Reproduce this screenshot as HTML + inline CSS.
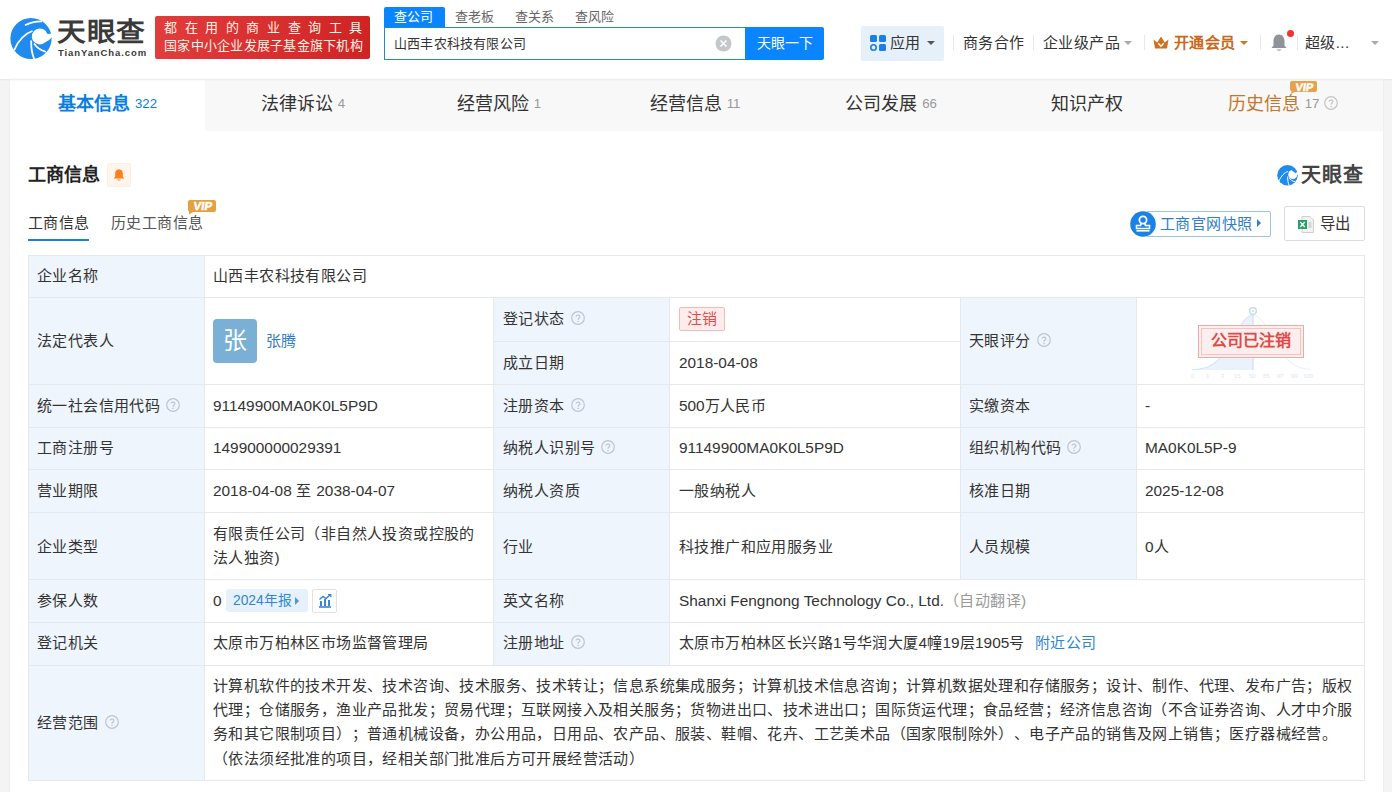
<!DOCTYPE html>
<html lang="zh-CN"><head><meta charset="utf-8">
<style>
*{margin:0;padding:0;box-sizing:border-box}
html,body{text-spacing-trim:space-all;width:1392px;height:792px;overflow:hidden;background:#f4f4f4;font-family:"Liberation Sans",sans-serif;color:#333}
.a{position:absolute;white-space:nowrap}
#hdr{position:absolute;left:0;top:0;width:1392px;height:79px;background:#fff;box-shadow:0 1px 1px rgba(0,0,0,.05)}
#card{position:absolute;left:10px;top:79px;width:1373px;height:713px;background:#fff;box-shadow:0 0 1px rgba(0,0,0,.12)}
#tabbar{position:absolute;left:10px;top:79px;width:1373px;height:52px;background:#f8f8f8}
.tab{position:absolute;top:78px;height:52px;line-height:52px;font-size:18px;color:#333;text-align:center;white-space:nowrap}
.tab .n{font-size:13.2px;color:#999;margin-left:5px;position:relative;top:-2px}
.hl{position:absolute;height:1px;background:#e5e8ec}
.vl{position:absolute;width:1px;background:#e5e8ec}
.lb{position:absolute;background:#eff5fc}
.t{position:absolute;white-space:nowrap;font-size:15px;letter-spacing:0.4px;color:#333;line-height:20px}
.l{font-size:15.4px;letter-spacing:0}
.q{display:inline-block;width:14px;height:14px;vertical-align:middle;margin-left:6px;position:relative;top:-2px;letter-spacing:0}
.q svg{display:block}
</style></head><body>
<div id="hdr"></div>
<svg class="a" style="left:8px;top:14px" width="48" height="48" viewBox="0 0 48 48">
 <circle cx="23" cy="24.5" r="20.6" fill="#1f8bee"/>
 <path d="M39.4 20 A8 8 0 1 0 37 28.5 Q41 27 43.8 23.2 L46 19.5 Z" fill="#fff"/>
 <path d="M6 36.5 C10 27 17 19.5 24.5 17" stroke="#fff" stroke-width="1.8" fill="none"/>
 <path d="M17 11.3 C22 8.5 28 7.2 34 7.3" stroke="#fff" stroke-width="1.8" fill="none"/>
 <path d="M23.2 26.5 C23 34 24 40 26.2 45" stroke="#fff" stroke-width="1.8" fill="none"/>
 <path d="M26 29.5 C29 34 33 36.5 38 37.8" stroke="#fff" stroke-width="1.8" fill="none"/>
</svg>
<div class="a" style="left:57px;top:15px;font-size:26px;font-weight:bold;color:#3a3a3a;line-height:34px;letter-spacing:1px;transform:scaleX(1.1);transform-origin:0 0">天眼查</div>
<div class="a" style="left:58px;top:47px;font-size:9.5px;font-weight:bold;color:#3a3a3a;line-height:12px;letter-spacing:0.9px">TianYanCha.com</div>
<div class="a" style="left:155px;top:16px;width:215px;height:43px;border-radius:2px;background:linear-gradient(90deg,#e23c3c,#cf2424)"></div>
<div class="a" style="left:164px;top:19px;font-size:13px;line-height:18px;color:#fff2e6;letter-spacing:7.6px">都在用的商业查询工具</div>
<div class="a" style="left:164px;top:37px;font-size:13px;line-height:18px;color:#fff2e6;letter-spacing:0.25px">国家中小企业发展子基金旗下机构</div>
<!-- search -->
<div class="a" style="left:384px;top:7px;width:61px;height:21px;background:#0a84ff;border-radius:2px 2px 0 0"></div>
<div class="a" style="left:394px;top:8px;font-size:13px;line-height:18px;letter-spacing:0.2px;color:#fff">查公司</div>
<div class="a" style="left:455px;top:8px;font-size:13px;line-height:18px;letter-spacing:0.2px;color:#666">查老板</div>
<div class="a" style="left:515px;top:8px;font-size:13px;line-height:18px;letter-spacing:0.2px;color:#666">查关系</div>
<div class="a" style="left:575px;top:8px;font-size:13px;line-height:18px;letter-spacing:0.2px;color:#666">查风险</div>
<div class="a" style="left:384px;top:27px;width:362px;height:33px;border:1px solid #2b88c8;border-right:none;background:#fff"></div>
<div class="a" style="left:394px;top:34px;font-size:13px;letter-spacing:0.2px;line-height:20px;color:#333">山西丰农科技有限公司</div>
<svg class="a" style="left:715px;top:35px" width="17" height="17" viewBox="0 0 17 17"><circle cx="8.5" cy="8.5" r="8" fill="#c4c7cc"/><path d="M5.5 5.5L11.5 11.5M11.5 5.5L5.5 11.5" stroke="#fff" stroke-width="1.6"/></svg>
<div class="a" style="left:745px;top:27px;width:79px;height:33px;background:#0a84ff;border-radius:0 2px 2px 0;color:#fff;font-size:14px;line-height:33px;text-align:center">天眼一下</div>
<!-- right nav -->
<div class="a" style="left:861px;top:26px;width:83px;height:35px;background:#e6f0fb;border-radius:2px"></div>
<svg class="a" style="left:870px;top:35px" width="16" height="16" viewBox="0 0 16 16"><rect x="0" y="0" width="7" height="7" rx="1.5" fill="#1a7fe8"/><rect x="9" y="0" width="7" height="7" rx="1.5" fill="#1a7fe8"/><rect x="9" y="9" width="7" height="7" rx="1.5" fill="#1a7fe8"/><circle cx="3.5" cy="12.5" r="2.7" fill="none" stroke="#1a7fe8" stroke-width="1.6"/></svg>
<div class="a" style="left:890px;top:33px;font-size:15px;letter-spacing:0.4px;line-height:20px;color:#333">应用</div>
<div class="a" style="left:927px;top:41px;width:0;height:0;border-left:4px solid transparent;border-right:4px solid transparent;border-top:4px solid #555"></div>
<div class="a" style="left:953px;top:35px;width:1px;height:15px;background:#e8e8e8"></div>
<div class="a" style="left:963px;top:33px;font-size:15px;letter-spacing:0.4px;line-height:20px;color:#333">商务合作</div>
<div class="a" style="left:1033px;top:35px;width:1px;height:15px;background:#e8e8e8"></div>
<div class="a" style="left:1043px;top:33px;font-size:15px;letter-spacing:0.4px;line-height:20px;color:#333">企业级产品</div>
<div class="a" style="left:1124px;top:41px;width:0;height:0;border-left:4px solid transparent;border-right:4px solid transparent;border-top:4px solid #aaa"></div>
<div class="a" style="left:1144px;top:35px;width:1px;height:15px;background:#e8e8e8"></div>
<svg class="a" style="left:1153px;top:36px" width="16" height="13" viewBox="0 0 16 13"><path d="M0.5 3.5 L4.2 6.5 L8 0.5 L11.8 6.5 L15.5 3.5 L14 12.5 L2 12.5 Z" fill="#d0701e"/><path d="M5.3 7.3 L8 10.2 L10.7 7.3" fill="none" stroke="#fff" stroke-width="1.5"/></svg>
<div class="a" style="left:1174px;top:33px;font-size:15px;letter-spacing:0.4px;line-height:20px;color:#c8691c;font-weight:bold">开通会员</div>
<div class="a" style="left:1240px;top:41px;width:0;height:0;border-left:4px solid transparent;border-right:4px solid transparent;border-top:4px solid #d5731d"></div>
<div class="a" style="left:1260px;top:35px;width:1px;height:15px;background:#e8e8e8"></div>
<svg class="a" style="left:1270px;top:33px" width="18" height="19" viewBox="0 0 18 19"><path d="M9 1.5 C5 1.5 3.5 5 3.5 8 L3.5 12.5 L1.5 15 L16.5 15 L14.5 12.5 L14.5 8 C14.5 5 13 1.5 9 1.5Z" fill="#8f949b"/><path d="M6.5 16.5 C7 18 11 18 11.5 16.5Z" fill="#8f949b"/></svg>
<div class="a" style="left:1287px;top:30px;width:7px;height:7px;border-radius:50%;background:#f0332f"></div>
<div class="a" style="left:1297px;top:35px;width:1px;height:15px;background:#e8e8e8"></div>
<div class="a" style="left:1305px;top:33px;font-size:15px;letter-spacing:0.4px;line-height:20px;color:#333">超级...</div>
<div class="a" style="left:1371px;top:41px;width:0;height:0;border-left:4px solid transparent;border-right:4px solid transparent;border-top:4px solid #aaa"></div>

<div id="card"></div>
<div id="tabbar"></div>
<div class="a" style="left:10px;top:79px;width:195px;height:52px;background:#fff"></div>
<div class="tab" style="left:10px;width:195px;color:#0a7ee0;font-weight:bold">基本信息<span class="n" style="color:#0a7ee0;font-weight:normal">322</span></div>
<div class="tab" style="left:205px;width:196px">法律诉讼<span class="n">4</span></div>
<div class="tab" style="left:401px;width:196px">经营风险<span class="n">1</span></div>
<div class="tab" style="left:597px;width:196px">经营信息<span class="n">11</span></div>
<div class="tab" style="left:793px;width:196px">公司发展<span class="n">66</span></div>
<div class="tab" style="left:989px;width:196px">知识产权</div>
<div class="tab" style="left:1185px;width:196px;color:#c5762a">历史信息<span class="n">17</span><span style="display:inline-block;vertical-align:middle;margin-left:5px;position:relative;top:-2px;line-height:0"><svg width="14" height="14" viewBox="0 0 14 14"><circle cx="7" cy="7" r="6.3" fill="none" stroke="#c4c4c4" stroke-width="1.2"/><path d="M5.1 5.4 C5.1 3.6 8.9 3.6 8.9 5.5 C8.9 6.9 7 7 7 8.7" fill="none" stroke="#c4c4c4" stroke-width="1.2"/><circle cx="7" cy="10.5" r="0.8" fill="#c4c4c4"/></svg></span></div>
<svg class="a" style="left:1290px;top:81px" width="27" height="13" viewBox="0 0 27 13"><path d="M2 0 H25 Q27 0 27 2 V9 Q27 11 25 11 H5 L1 13 L1.5 10 Q0 9.5 0 8 V2 Q0 0 2 0Z" fill="#e9a24c"/><text x="14" y="9.8" font-family="Liberation Sans" font-weight="bold" font-size="11" fill="#fff" text-anchor="middle" stroke="#fff" stroke-width="0.5" transform="skewX(-8) translate(1.3 0)">VIP</text></svg>


<div class="a" style="left:0;top:79px;width:1392px;height:2px;background:linear-gradient(#ebebeb,rgba(245,245,245,0))"></div><div class="a" style="left:28px;top:163px;font-size:18px;line-height:24px;font-weight:bold;color:#222">工商信息</div>
<div class="a" style="left:107px;top:163px;width:24px;height:24px;background:#fff5ec;border:1px solid #fcefe4;border-radius:2px"></div>
<svg class="a" style="left:112px;top:168px" width="14" height="14" viewBox="0 0 14 14"><path d="M7 1.2 C4.3 1.2 3.2 3.4 3.2 5.6 L3.2 8.6 L1.8 10.4 L12.2 10.4 L10.8 8.6 L10.8 5.6 C10.8 3.4 9.7 1.2 7 1.2Z" fill="#ff7f1a"/><path d="M5.3 11.4 C5.6 12.9 8.4 12.9 8.7 11.4Z" fill="#ff7f1a"/></svg>
<div class="a" style="left:28px;top:213px;font-size:15px;letter-spacing:0.3px;line-height:20px;color:#333">工商信息</div>
<div class="a" style="left:28px;top:239px;width:61px;height:2px;background:#1a82d6"></div>
<div class="a" style="left:111px;top:213px;font-size:15px;letter-spacing:0.4px;line-height:20px;color:#555">历史工商信息</div>
<svg class="a" style="left:188px;top:200px" width="28" height="15" viewBox="0 0 28 15"><path d="M2 0 H26 Q28 0 28 2 V10 Q28 12 26 12 H5 L1 14.5 L1 11.5 Q0 11 0 9 V2 Q0 0 2 0Z" fill="#e5a040"/><text x="14.5" y="10.3" font-family="Liberation Sans" font-weight="bold" font-size="11.5" fill="#fff" text-anchor="middle" stroke="#fff" stroke-width="0.5" transform="skewX(-8) translate(1.3 0)">VIP</text></svg>
<!-- right logo -->
<svg class="a" style="left:1276px;top:163px" width="24" height="24" viewBox="0 0 48 48">
 <circle cx="23" cy="24.5" r="20.5" fill="#1f8bee"/>
 <circle cx="33.5" cy="23" r="9" fill="#fff"/>
 <path d="M39.5 20.5 L46 14 L46 24 L43.6 23.6 Z" fill="#fff"/>
 <path d="M31 14.5 C34 13.5 39 13.6 42 16.5 C43.5 18 40 19.5 39.5 20.5 Z" fill="#1f8bee"/>
 <path d="M6 36 C10 26 17 19 24 17" stroke="#fff" stroke-width="2" fill="none"/>
 <path d="M23.5 27 C23 34 24 40 26.5 45" stroke="#fff" stroke-width="2" fill="none"/>
 <path d="M26.5 30 C29 34 33 36.5 38 37.5" stroke="#fff" stroke-width="2" fill="none"/>
</svg>
<div class="a" style="left:1301px;top:162px;font-size:20px;line-height:26px;font-weight:bold;color:#444;letter-spacing:1px">天眼查</div>
<!-- buttons -->
<div class="a" style="left:1146px;top:211px;width:125px;height:26px;border:1px solid #9cc3e6;border-radius:2px;background:#fff"></div>
<svg class="a" style="left:1130px;top:211px" width="26" height="26" viewBox="0 0 26 26"><circle cx="13" cy="13" r="12.8" fill="#1a82e6"/><circle cx="13" cy="9" r="3.6" fill="none" stroke="#fff" stroke-width="1.8"/><path d="M11.3 12.2 L10.5 14.5 H6.5 V17.5 H19.5 V14.5 H15.5 L14.7 12.2" fill="none" stroke="#fff" stroke-width="1.6"/><rect x="6.5" y="19" width="13" height="1.6" fill="#fff"/></svg>
<div class="a" style="left:1160px;top:214px;font-size:15px;letter-spacing:0.4px;line-height:20px;color:#2f7ec8">工商官网快照</div>
<div class="a" style="left:1257px;top:219px;width:0;height:0;border-top:4px solid transparent;border-bottom:4px solid transparent;border-left:4px solid #2f7ec8"></div>
<div class="a" style="left:1284px;top:206px;width:81px;height:35px;border:1px solid #dcdcdc;border-radius:2px;background:#fff"></div>
<svg class="a" style="left:1298px;top:216px" width="16" height="17" viewBox="0 0 16 17"><path d="M4 0.5 H12 L15.5 4 V16.5 H4Z" fill="#f2f2f2" stroke="#cfcfcf"/><rect x="0" y="4" width="9" height="9" fill="#21a366"/><path d="M2.2 6 L6.8 11 M6.8 6 L2.2 11" stroke="#fff" stroke-width="1.4"/><path d="M10.5 7 H13.5 M10.5 9 H13.5 M10.5 11 H13.5" stroke="#bbb" stroke-width="1"/></svg>
<div class="a" style="left:1320px;top:214px;font-size:15.4px;line-height:20px;color:#333">导出</div>
<div class="lb" style="left:28px;top:255px;width:176px;height:525px"></div>
<div class="lb" style="left:493px;top:297px;width:176px;height:368px"></div>
<div class="lb" style="left:960px;top:297px;width:176px;height:282px"></div>
<div class="hl" style="left:28px;top:255px;width:1337px"></div>
<div class="hl" style="left:28px;top:297px;width:1337px"></div>
<div class="hl" style="left:28px;top:384px;width:1337px"></div>
<div class="hl" style="left:28px;top:427px;width:1337px"></div>
<div class="hl" style="left:28px;top:469px;width:1337px"></div>
<div class="hl" style="left:28px;top:512px;width:1337px"></div>
<div class="hl" style="left:28px;top:579px;width:1337px"></div>
<div class="hl" style="left:28px;top:622px;width:1337px"></div>
<div class="hl" style="left:28px;top:665px;width:1337px"></div>
<div class="hl" style="left:28px;top:780px;width:1337px"></div>
<div class="hl" style="left:493px;top:341px;width:467px"></div>
<div class="vl" style="left:28px;top:255px;height:526px"></div>
<div class="vl" style="left:1364px;top:255px;height:526px"></div>
<div class="vl" style="left:204px;top:255px;height:525px"></div>
<div class="vl" style="left:493px;top:297px;height:368px"></div>
<div class="vl" style="left:669px;top:297px;height:368px"></div>
<div class="vl" style="left:960px;top:297px;height:282px"></div>
<div class="vl" style="left:1136px;top:297px;height:282px"></div>
<div class="t" style="left:37px;top:266px;">企业名称</div>
<div class="t" style="left:213px;top:266px;">山西丰农科技有限公司</div>
<div class="t" style="left:37px;top:331px;">法定代表人</div>
<div class="a" style="left:213px;top:319px;width:44px;height:44px;border-radius:4px;background:#7aafd6;color:#fff;font-size:24px;line-height:44px;text-align:center">张</div>
<div class="t" style="left:266px;top:331px;color:#2f7ec8">张腾</div>
<div class="t" style="left:503px;top:309px;">登记状态<span class="l"><span class="q"><svg width="14" height="14" viewBox="0 0 14 14"><circle cx="7" cy="7" r="6.3" fill="none" stroke="#b9c7d3" stroke-width="1.2"/><path d="M5.1 5.4 C5.1 3.6 8.9 3.6 8.9 5.5 C8.9 6.9 7 7 7 8.7" fill="none" stroke="#b9c7d3" stroke-width="1.2"/><circle cx="7" cy="10.5" r="0.8" fill="#b9c7d3"/></svg></span></span></div>
<div class="t" style="left:503px;top:353px;">成立日期</div>
<div class="a" style="left:679px;top:307px;width:46px;height:24px;background:#fdecec;border:1px solid #f4b9b9;border-radius:2px;color:#e24c4c;font-size:15px;line-height:22px;text-align:center">注销</div>
<div class="t" style="left:679px;top:353px;"><span class="l">2018-04-08</span></div>
<div class="t" style="left:969px;top:331px;">天眼评分<span class="l"><span class="q"><svg width="14" height="14" viewBox="0 0 14 14"><circle cx="7" cy="7" r="6.3" fill="none" stroke="#b9c7d3" stroke-width="1.2"/><path d="M5.1 5.4 C5.1 3.6 8.9 3.6 8.9 5.5 C8.9 6.9 7 7 7 8.7" fill="none" stroke="#b9c7d3" stroke-width="1.2"/><circle cx="7" cy="10.5" r="0.8" fill="#b9c7d3"/></svg></span></span></div>
<svg class="a" style="left:1186px;top:303px" width="130" height="78" viewBox="0 0 130 78">
<path d="M6.0 66.7 L7.0 66.6 L8.0 66.6 L9.0 66.5 L10.0 66.4 L11.0 66.3 L12.0 66.2 L13.0 66.0 L14.0 65.9 L15.0 65.7 L16.0 65.5 L17.0 65.3 L18.0 65.0 L19.0 64.7 L20.0 64.4 L21.0 64.1 L22.0 63.7 L23.0 63.2 L24.0 62.8 L25.0 62.2 L26.0 61.6 L27.0 61.0 L28.0 60.3 L29.0 59.6 L30.0 58.7 L31.0 57.9 L32.0 56.9 L33.0 55.9 L34.0 54.8 L35.0 53.7 L36.0 52.5 L37.0 51.2 L38.0 49.8 L39.0 48.4 L40.0 47.0 L41.0 45.4 L42.0 43.9 L43.0 42.2 L44.0 40.6 L45.0 38.9 L46.0 37.1 L47.0 35.4 L48.0 33.6 L49.0 31.9 L50.0 30.1 L51.0 28.4 L52.0 26.7 L53.0 25.1 L54.0 23.5 L55.0 21.9 L56.0 20.5 L57.0 19.1 L58.0 17.8 L59.0 16.7 L60.0 15.6 L61.0 14.7 L62.0 13.9 L63.0 13.2 L64.0 12.7 L65.0 12.3 L66.0 12.1 L67.0 12.0 L67 67 L6 67 Z" fill="#eaf3fb"/>
<path d="M6.0 66.7 L7.0 66.6 L8.0 66.6 L9.0 66.5 L10.0 66.4 L11.0 66.3 L12.0 66.2 L13.0 66.0 L14.0 65.9 L15.0 65.7 L16.0 65.5 L17.0 65.3 L18.0 65.0 L19.0 64.7 L20.0 64.4 L21.0 64.1 L22.0 63.7 L23.0 63.2 L24.0 62.8 L25.0 62.2 L26.0 61.6 L27.0 61.0 L28.0 60.3 L29.0 59.6 L30.0 58.7 L31.0 57.9 L32.0 56.9 L33.0 55.9 L34.0 54.8 L35.0 53.7 L36.0 52.5 L37.0 51.2 L38.0 49.8 L39.0 48.4 L40.0 47.0 L41.0 45.4 L42.0 43.9 L43.0 42.2 L44.0 40.6 L45.0 38.9 L46.0 37.1 L47.0 35.4 L48.0 33.6 L49.0 31.9 L50.0 30.1 L51.0 28.4 L52.0 26.7 L53.0 25.1 L54.0 23.5 L55.0 21.9 L56.0 20.5 L57.0 19.1 L58.0 17.8 L59.0 16.7 L60.0 15.6 L61.0 14.7 L62.0 13.9 L63.0 13.2 L64.0 12.7 L65.0 12.3 L66.0 12.1 L67.0 12.0" fill="none" stroke="#d8e7f4" stroke-width="1.2"/>
<path d="M67.0 12.0 L68.0 12.1 L69.0 12.3 L70.0 12.7 L71.0 13.2 L72.0 13.9 L73.0 14.7 L74.0 15.6 L75.0 16.7 L76.0 17.8 L77.0 19.1 L78.0 20.5 L79.0 21.9 L80.0 23.5 L81.0 25.1 L82.0 26.7 L83.0 28.4 L84.0 30.1 L85.0 31.9 L86.0 33.6 L87.0 35.4 L88.0 37.1 L89.0 38.9 L90.0 40.6 L91.0 42.2 L92.0 43.9 L93.0 45.4 L94.0 47.0 L95.0 48.4 L96.0 49.8 L97.0 51.2 L98.0 52.5 L99.0 53.7 L100.0 54.8 L101.0 55.9 L102.0 56.9 L103.0 57.9 L104.0 58.7 L105.0 59.6 L106.0 60.3 L107.0 61.0 L108.0 61.6 L109.0 62.2 L110.0 62.8 L111.0 63.2 L112.0 63.7 L113.0 64.1 L114.0 64.4 L115.0 64.7 L116.0 65.0 L117.0 65.3 L118.0 65.5 L119.0 65.7 L120.0 65.9 L121.0 66.0 L122.0 66.2 L123.0 66.3 L124.0 66.4" fill="none" stroke="#eef3f8" stroke-width="1.2"/>
<line x1="67" y1="11" x2="67" y2="67" stroke="#cfe1f1" stroke-width="1.2"/>
<circle cx="67" cy="8" r="3.3" fill="#fff" stroke="#c7dcef" stroke-width="1.5"/>
<circle cx="67" cy="8" r="1" fill="#c7dcef"/>
<text y="75" font-family="Liberation Sans" font-size="6" fill="#e0e7ee"><tspan x="5">0</tspan><tspan x="20">1</tspan><tspan x="35">3</tspan><tspan x="48">15</tspan><tspan x="63">50</tspan><tspan x="77">85</tspan><tspan x="91">97</tspan><tspan x="105">99</tspan><tspan x="117">100</tspan></text>
</svg>
<div class="a" style="left:1198px;top:325px;width:106px;height:33px;background:#fdeeee;border:1px solid #eeaaaa"></div>
<div class="a" style="left:1201px;top:328px;width:100px;height:27px;border:1px solid #f1c4c4"></div>
<div class="a" style="left:1198px;top:330px;width:106px;text-align:center;font-size:16px;line-height:22px;font-weight:bold;color:#dd4b47">公司已注销</div>
<div class="t" style="left:37px;top:396px;">统一社会信用代码<span class="l"><span class="q"><svg width="14" height="14" viewBox="0 0 14 14"><circle cx="7" cy="7" r="6.3" fill="none" stroke="#b9c7d3" stroke-width="1.2"/><path d="M5.1 5.4 C5.1 3.6 8.9 3.6 8.9 5.5 C8.9 6.9 7 7 7 8.7" fill="none" stroke="#b9c7d3" stroke-width="1.2"/><circle cx="7" cy="10.5" r="0.8" fill="#b9c7d3"/></svg></span></span></div>
<div class="t" style="left:213px;top:396px;"><span class="l">91149900MA0K0L5P9D</span></div>
<div class="t" style="left:503px;top:396px;">注册资本<span class="l"><span class="q"><svg width="14" height="14" viewBox="0 0 14 14"><circle cx="7" cy="7" r="6.3" fill="none" stroke="#b9c7d3" stroke-width="1.2"/><path d="M5.1 5.4 C5.1 3.6 8.9 3.6 8.9 5.5 C8.9 6.9 7 7 7 8.7" fill="none" stroke="#b9c7d3" stroke-width="1.2"/><circle cx="7" cy="10.5" r="0.8" fill="#b9c7d3"/></svg></span></span></div>
<div class="t" style="left:679px;top:396px;"><span class="l">500</span>万人民币</div>
<div class="t" style="left:969px;top:396px;">实缴资本</div>
<div class="t" style="left:1145px;top:396px;"><span class="l">-</span></div>
<div class="t" style="left:37px;top:438px;">工商注册号</div>
<div class="t" style="left:213px;top:438px;"><span class="l">149900000029391</span></div>
<div class="t" style="left:503px;top:438px;">纳税人识别号<span class="l"><span class="q"><svg width="14" height="14" viewBox="0 0 14 14"><circle cx="7" cy="7" r="6.3" fill="none" stroke="#b9c7d3" stroke-width="1.2"/><path d="M5.1 5.4 C5.1 3.6 8.9 3.6 8.9 5.5 C8.9 6.9 7 7 7 8.7" fill="none" stroke="#b9c7d3" stroke-width="1.2"/><circle cx="7" cy="10.5" r="0.8" fill="#b9c7d3"/></svg></span></span></div>
<div class="t" style="left:679px;top:438px;"><span class="l">91149900MA0K0L5P9D</span></div>
<div class="t" style="left:969px;top:438px;">组织机构代码<span class="l"><span class="q"><svg width="14" height="14" viewBox="0 0 14 14"><circle cx="7" cy="7" r="6.3" fill="none" stroke="#b9c7d3" stroke-width="1.2"/><path d="M5.1 5.4 C5.1 3.6 8.9 3.6 8.9 5.5 C8.9 6.9 7 7 7 8.7" fill="none" stroke="#b9c7d3" stroke-width="1.2"/><circle cx="7" cy="10.5" r="0.8" fill="#b9c7d3"/></svg></span></span></div>
<div class="t" style="left:1145px;top:438px;"><span class="l">MA0K0L5P-9</span></div>
<div class="t" style="left:37px;top:481px;">营业期限</div>
<div class="t" style="left:213px;top:481px;"><span class="l">2018-04-08</span> 至 <span class="l">2038-04-07</span></div>
<div class="t" style="left:503px;top:481px;">纳税人资质</div>
<div class="t" style="left:679px;top:481px;">一般纳税人</div>
<div class="t" style="left:969px;top:481px;">核准日期</div>
<div class="t" style="left:1145px;top:481px;"><span class="l">2025-12-08</span></div>
<div class="t" style="left:37px;top:537px;">企业类型</div>
<div class="t" style="left:213px;top:524px;">有限责任公司（非自然人投资或控股的</div>
<div class="t" style="left:213px;top:548px;">法人独资<span class="l">)</span></div>
<div class="t" style="left:503px;top:537px;">行业</div>
<div class="t" style="left:679px;top:537px;">科技推广和应用服务业</div>
<div class="t" style="left:969px;top:537px;">人员规模</div>
<div class="t" style="left:1145px;top:537px;"><span class="l">0</span>人</div>
<div class="t" style="left:37px;top:591px;">参保人数</div>
<div class="t" style="left:213px;top:591px;"><span class="l">0</span></div>
<div class="a" style="left:226px;top:589px;width:82px;height:23px;background:#e6f1fc;border-radius:3px"></div>
<div class="a" style="left:233px;top:591px;font-size:13.8px;line-height:19px;color:#2e86d4">2024年报</div>
<div class="a" style="left:295px;top:597px;width:0;height:0;border-top:4px solid transparent;border-bottom:4px solid transparent;border-left:4px solid #4a96dc"></div>
<div class="a" style="left:312px;top:589px;width:25px;height:24px;border:1px solid #e2e2e2;border-radius:2px;background:#fff"></div>
<svg class="a" style="left:318px;top:594px" width="14" height="14" viewBox="0 0 14 14"><path d="M1 13 H13" stroke="#3a86d0" stroke-width="1.6"/><rect x="2" y="7" width="2" height="5" fill="#3a86d0"/><rect x="6" y="5" width="2" height="7" fill="#3a86d0"/><rect x="10" y="6" width="2" height="6" fill="#3a86d0"/><path d="M1.5 5.5 L5 2.5 L8 4.5 L12 1" stroke="#3a86d0" stroke-width="1.4" fill="none"/><path d="M10 0.5 H12.8 V3.3" stroke="#3a86d0" stroke-width="1.3" fill="none"/></svg>
<div class="t" style="left:503px;top:591px;">英文名称</div>
<div class="t" style="left:679px;top:591px;"><span class="l">Shanxi Fengnong Technology Co., Ltd.</span><span style="color:#999">（自动翻译<span class="l">)</span></span></div>
<div class="t" style="left:37px;top:633px;">登记机关</div>
<div class="t" style="left:213px;top:633px;">太原市万柏林区市场监督管理局</div>
<div class="t" style="left:503px;top:633px;">注册地址<span class="l"><span class="q"><svg width="14" height="14" viewBox="0 0 14 14"><circle cx="7" cy="7" r="6.3" fill="none" stroke="#b9c7d3" stroke-width="1.2"/><path d="M5.1 5.4 C5.1 3.6 8.9 3.6 8.9 5.5 C8.9 6.9 7 7 7 8.7" fill="none" stroke="#b9c7d3" stroke-width="1.2"/><circle cx="7" cy="10.5" r="0.8" fill="#b9c7d3"/></svg></span></span></div>
<div class="t" style="left:679px;top:633px;">太原市万柏林区长兴路<span class="l">1</span>号华润大厦<span class="l">4</span>幢<span class="l">19</span>层<span class="l">1905</span>号<span style="color:#2f86d0;margin-left:10px">附近公司</span></div>
<div class="t" style="left:37px;top:713px;">经营范围<span class="l"><span class="q"><svg width="14" height="14" viewBox="0 0 14 14"><circle cx="7" cy="7" r="6.3" fill="none" stroke="#b9c7d3" stroke-width="1.2"/><path d="M5.1 5.4 C5.1 3.6 8.9 3.6 8.9 5.5 C8.9 6.9 7 7 7 8.7" fill="none" stroke="#b9c7d3" stroke-width="1.2"/><circle cx="7" cy="10.5" r="0.8" fill="#b9c7d3"/></svg></span></span></div>
<div class="t" style="left:213px;top:676px;">计算机软件的技术开发、技术咨询、技术服务、技术转让；信息系统集成服务；计算机技术信息咨询；计算机数据处理和存储服务；设计、制作、代理、发布广告；版权</div>
<div class="t" style="left:213px;top:700px;">代理；仓储服务，渔业产品批发；贸易代理；互联网接入及相关服务；货物进出口、技术进出口；国际货运代理；食品经营；经济信息咨询（不含证券咨询、人才中介服</div>
<div class="t" style="left:213px;top:724px;">务和其它限制项目）；普通机械设备，办公用品，日用品、农产品、服装、鞋帽、花卉、工艺美术品（国家限制除外）、电子产品的销售及网上销售；医疗器械经营。</div>
<div class="t" style="left:213px;top:749px;">（依法须经批准的项目，经相关部门批准后方可开展经营活动）</div>
</body></html>
